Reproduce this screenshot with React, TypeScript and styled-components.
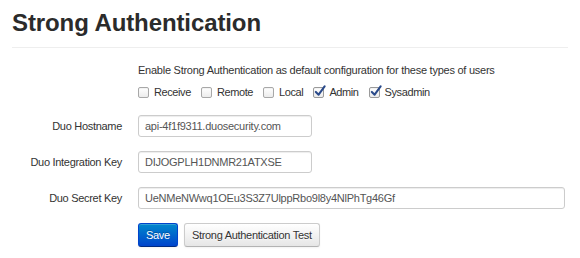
import React, { useState } from "react";
import styled, { createGlobalStyle } from "styled-components";

const GlobalStyle = createGlobalStyle`
  html, body {
    margin: 0;
    padding: 0;
    background: #ffffff;
  }
  body {
    font-family: "Liberation Sans", Arial, sans-serif;
    color: #333333;
  }
`;

const Page = styled.div`
  width: 580px;
  height: 258px;
  padding: 0 12px;
  box-sizing: border-box;
  overflow: hidden;
`;

const Title = styled.h1`
  margin: 0;
  padding: 9px 0 11px;
  font-size: 24px;
  line-height: 27px;
  font-weight: bold;
  letter-spacing: -0.1px;
  color: #2b2b2b;
  border-bottom: 1px solid #eeeeee;
`;

const Form = styled.div`
  display: grid;
  grid-template-columns: 110px 1fr;
  column-gap: 16px;
  align-items: center;
  padding-top: 15px;
  letter-spacing: -0.25px;
`;

const Intro = styled.div`
  grid-column: 2;
  font-size: 11px;
  line-height: 14px;
  color: #333;
`;

const CheckRow = styled.div`
  grid-column: 2;
  display: flex;
  gap: 10px;
  margin-top: 9px;
  margin-bottom: 10px;
  letter-spacing: -0.4px;
`;

const CheckLabel = styled.label`
  display: flex;
  align-items: center;
  gap: 5px;
  font-size: 11px;
  color: #333;
`;

const Box = styled.span<{ checked: boolean }>`
  width: 9px;
  height: 9px;
  border: 1px solid ${(p) => (p.checked ? "#9a9a9a" : "#a8a8a8")};
  border-radius: 2px;
  background: linear-gradient(#ffffff, #ececec);
  position: relative;
  box-shadow: inset 0 1px 1px rgba(0, 0, 0, 0.05);
`;

const Tick = styled.svg`
  position: absolute;
  left: 0;
  top: -3px;
`;

const FieldLabel = styled.div`
  grid-column: 1;
  text-align: right;
  font-size: 11px;
  letter-spacing: -0.3px;
  color: #333;
`;

const Input = styled.input<{ wide?: boolean }>`
  grid-column: 2;
  width: ${(p) => (p.wide ? "427px" : "174px")};
  height: 22px;
  box-sizing: border-box;
  margin: 7px 0;
  padding: 0 6px;
  border: 1px solid #cccccc;
  border-radius: 3px;
  box-shadow: inset 0 1px 1px rgba(0, 0, 0, 0.075);
  font-family: "Liberation Sans", Arial, sans-serif;
  font-size: 11px;
  letter-spacing: -0.25px;
  color: #555555;
  outline: none;
`;

const Actions = styled.div`
  grid-column: 2;
  display: flex;
  gap: 6px;
  margin-top: 7px;
`;

const Button = styled.button<{ primary?: boolean }>`
  height: 24px;
  padding: 0 7px;
  border-radius: 3px;
  font-family: "Liberation Sans", Arial, sans-serif;
  font-size: 11px;
  letter-spacing: -0.3px;
  cursor: pointer;
  border: 1px solid ${(p) => (p.primary ? "#0044cc" : "#cccccc")};
  border-bottom-color: ${(p) => (p.primary ? "#002a80" : "#b3b3b3")};
  color: ${(p) => (p.primary ? "#ffffff" : "#333333")};
  text-shadow: ${(p) =>
    p.primary ? "0 -1px 0 rgba(0,0,0,0.25)" : "0 1px 1px rgba(255,255,255,0.75)"};
  background: ${(p) =>
    p.primary
      ? "linear-gradient(#0088cc, #0044cc)"
      : "linear-gradient(#ffffff, #e6e6e6)"};
  box-shadow: inset 0 1px 0 rgba(255, 255, 255, 0.2), 0 1px 2px rgba(0, 0, 0, 0.05);
`;

type CheckProps = { label: string; initial: boolean };

const Check: React.FC<CheckProps> = ({ label, initial }) => {
  const [checked, setChecked] = useState(initial);
  return (
    <CheckLabel onClick={() => setChecked(!checked)}>
      <Box checked={checked}>
        {checked && (
          <Tick width="12" height="12" viewBox="0 0 13 13">
            <path
              d="M2 7.5 L5 10.5 L11.5 1.5"
              fill="none"
              stroke="#2a4a8a"
              strokeWidth="2.2"
              strokeLinecap="round"
              strokeLinejoin="round"
            />
          </Tick>
        )}
      </Box>
      {label}
    </CheckLabel>
  );
};

const App: React.FC = () => {
  return (
    <Page>
      <GlobalStyle />
      <Title>Strong Authentication</Title>
      <Form>
        <Intro>Enable Strong Authentication as default configuration for these types of users</Intro>
        <CheckRow>
          <Check label="Receive" initial={false} />
          <Check label="Remote" initial={false} />
          <Check label="Local" initial={false} />
          <Check label="Admin" initial={true} />
          <Check label="Sysadmin" initial={true} />
        </CheckRow>
        <FieldLabel>Duo Hostname</FieldLabel>
        <Input defaultValue="api-4f1f9311.duosecurity.com" />
        <FieldLabel>Duo Integration Key</FieldLabel>
        <Input defaultValue="DIJOGPLH1DNMR21ATXSE" />
        <FieldLabel>Duo Secret Key</FieldLabel>
        <Input wide defaultValue="UeNMeNWwq1OEu3S3Z7UlppRbo9l8y4NlPhTg46Gf" />
        <Actions>
          <Button primary>Save</Button>
          <Button>Strong Authentication Test</Button>
        </Actions>
      </Form>
    </Page>
  );
};

export default App;
